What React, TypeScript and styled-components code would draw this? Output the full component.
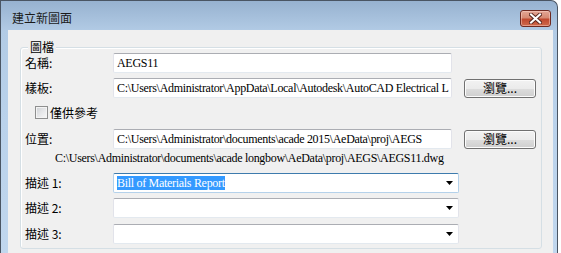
import React from "react";
import styled, { createGlobalStyle } from "styled-components";

const GlobalStyle = createGlobalStyle`
  html, body { margin: 0; padding: 0; background: #ffffff; }
  body { width: 561px; height: 253px; overflow: hidden; }
`;

const CJK = `"Noto Sans CJK TC", "Noto Sans", sans-serif`;
const SERIF = `"Liberation Serif", "Noto Sans CJK TC", serif`;

const Window = styled.div`
  width: 558px;
  height: 260px;
  box-sizing: border-box;
  border: 1px solid #4a5563;
  border-bottom: none;
  border-top-right-radius: 7px;
  background: linear-gradient(to bottom, #97b2d0 0px, #b2cbe5 30px, #bad2eb 120px, #c1d7ee 260px);
  display: flex;
  flex-direction: column;
  overflow: hidden;
`;

const TitleBar = styled.div`
  height: 29px;
  box-sizing: border-box;
  padding: 5px 6px 0 11px;
  display: flex;
  align-items: center;
  justify-content: space-between;
`;

const Title = styled.span`
  font-family: ${CJK};
  font-size: 12px;
  line-height: 14px;
  color: #1a1a1a;
`;

const CloseButton = styled.div`
  width: 31px;
  height: 17px;
  box-sizing: border-box;
  border: 1px solid #6e2a21;
  border-radius: 3px;
  background: linear-gradient(to bottom, #e3a695 0%, #d68a73 45%, #c0492f 55%, #cf6a4c 100%);
  box-shadow: inset 0 0 0 1px rgba(255, 220, 210, 0.45);
  display: flex;
  align-items: center;
  justify-content: center;
`;

const Client = styled.div`
  flex: 1;
  margin: 0 4px 0 7px;
  background: #f0f0f0;
  padding: 17px 11px 0 12px;
`;

const GroupBox = styled.div`
  position: relative;
  height: 202px;
  box-sizing: border-box;
  border: 1px solid #d5dfe5;
  border-radius: 3px;
  box-shadow: inset 1px 1px 0 #ffffff;
  padding: 5px 0 0 4px;
  display: flex;
  flex-direction: column;
`;

const GroupTitle = styled.span`
  position: absolute;
  top: -8px;
  left: 7px;
  padding: 0 2px;
  background: #f0f0f0;
  font-family: ${CJK};
  font-size: 12px;
  line-height: 14px;
  color: #000;
`;

const Row = styled.div<{ $top: number }>`
  display: flex;
  align-items: center;
  height: 20px;
  margin-top: ${(p) => p.$top}px;
`;

const Label = styled.span`
  width: 88px;
  flex: none;
  font-family: ${CJK};
  font-size: 12px;
  line-height: 14px;
  color: #000;
  white-space: pre;
`;

const TextBox = styled.div<{ $w: number; $focus?: boolean }>`
  position: relative;
  width: ${(p) => p.$w}px;
  height: 20px;
  box-sizing: border-box;
  background: #ffffff;
  border: 1px solid ${(p) => (p.$focus ? "#b4d1ea" : "#e2e3ea")};
  border-top-color: ${(p) => (p.$focus ? "#3d7bad" : "#abadb3")};
  border-bottom-color: ${(p) => (p.$focus ? "#b4d1ea" : "#e3e9ef")};
  border-radius: 2px;
  padding: 0 3px;
  display: flex;
  align-items: center;
  font-family: ${SERIF};
  font-size: 12px;
  letter-spacing: -0.3px;
  line-height: 14px;
  color: #000;
  white-space: nowrap;
  overflow: hidden;
`;

const Selected = styled.span`
  background: #3399ff;
  color: #ffffff;
`;

const Arrow = styled.svg`
  position: absolute;
  right: 5px;
  top: 7px;
`;

const Button = styled.div`
  width: 72px;
  height: 19px;
  margin-left: 12px;
  box-sizing: border-box;
  border: 1px solid #707070;
  border-radius: 3px;
  background: linear-gradient(to bottom, #f2f2f2 0%, #ebebeb 50%, #dddddd 51%, #cfcfcf 100%);
  box-shadow: inset 0 0 0 1px #fcfcfc;
  display: flex;
  align-items: center;
  justify-content: center;
  font-family: ${CJK};
  font-size: 12px;
  line-height: 14px;
  color: #000;
`;

const CheckRow = styled.div`
  display: flex;
  align-items: center;
  height: 13px;
  margin-top: 8px;
  padding-left: 10px;
`;

const CheckBox = styled.div`
  width: 13px;
  height: 13px;
  box-sizing: border-box;
  border: 1px solid #8e8f8f;
  background: linear-gradient(135deg, #cdd0d4 0%, #e6e7e9 50%, #f8f8f8 100%);
  box-shadow: inset 0 0 0 1px #f4f4f4;
`;

const CheckLabel = styled.span`
  margin-left: 2px;
  font-family: ${CJK};
  font-size: 12px;
  line-height: 14px;
  color: #000;
`;

const PathText = styled.div`
  margin-top: 2px;
  padding-left: 30px;
  height: 14px;
  font-family: ${SERIF};
  font-size: 12px;
  letter-spacing: -0.3px;
  line-height: 14px;
  color: #000;
  white-space: nowrap;
`;

const DropArrow = () => (
  <Arrow width="7" height="4" viewBox="0 0 7 4">
    <polygon points="0,0 7,0 3.5,4" fill="#000" />
  </Arrow>
);

const Combo: React.FC<{ top: number; label: string; focus?: boolean; children?: React.ReactNode }> = ({
  top,
  label,
  focus,
  children,
}) => (
  <Row $top={top}>
    <Label>{label}</Label>
    <TextBox $w={346} $focus={focus}>
      {children}
      <DropArrow />
    </TextBox>
  </Row>
);

export default function App() {
  return (
    <>
      <GlobalStyle />
      <Window>
        <TitleBar>
          <Title>建立新圖面</Title>
          <CloseButton>
            <svg width="13" height="11" viewBox="0 0 13 11">
              <path d="M2 1.5 L11 9.5 M11 1.5 L2 9.5" stroke="#5a2a22" strokeWidth="4" strokeLinecap="square" />
              <path d="M2 1.5 L11 9.5 M11 1.5 L2 9.5" stroke="#ffffff" strokeWidth="2" strokeLinecap="square" />
            </svg>
          </CloseButton>
        </TitleBar>
        <Client>
          <GroupBox>
            <GroupTitle>圖檔</GroupTitle>
            <Row $top={0}>
              <Label>名稱:</Label>
              <TextBox $w={339}>AEGS11</TextBox>
            </Row>
            <Row $top={5}>
              <Label>樣板:</Label>
              <TextBox $w={339}>C:\Users\Administrator\AppData\Local\Autodesk\AutoCAD Electrical L</TextBox>
              <Button>瀏覽...</Button>
            </Row>
            <CheckRow>
              <CheckBox />
              <CheckLabel>僅供參考</CheckLabel>
            </CheckRow>
            <Row $top={10}>
              <Label>位置:</Label>
              <TextBox $w={339}>C:\Users\Administrator\documents\acade 2015\AeData\proj\AEGS</TextBox>
              <Button>瀏覽...</Button>
            </Row>
            <PathText>C:\Users\Administrator\documents\acade longbow\AeData\proj\AEGS\AEGS11.dwg</PathText>
            <Combo top={8} label="描述 1:" focus>
              <Selected>Bill of Materials Report</Selected>
            </Combo>
            <Combo top={5} label="描述 2:" />
            <Combo top={6} label="描述 3:" />
          </GroupBox>
        </Client>
      </Window>
    </>
  );
}
